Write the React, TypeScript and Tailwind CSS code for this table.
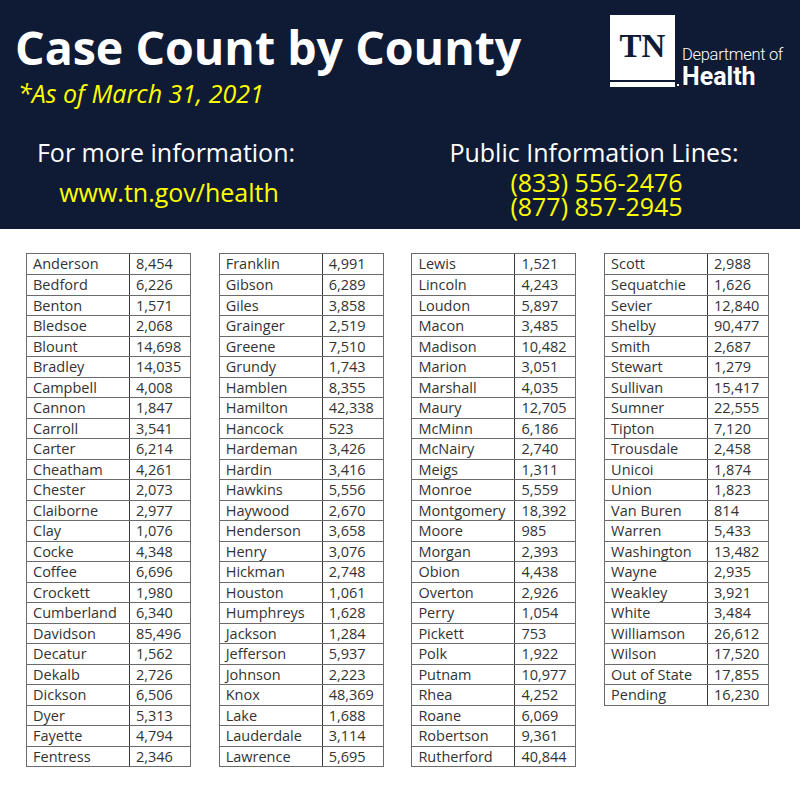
const T1: [string, string][] = [
  ['Anderson', '8,454'], ['Bedford', '6,226'], ['Benton', '1,571'], ['Bledsoe', '2,068'],
  ['Blount', '14,698'], ['Bradley', '14,035'], ['Campbell', '4,008'], ['Cannon', '1,847'],
  ['Carroll', '3,541'], ['Carter', '6,214'], ['Cheatham', '4,261'], ['Chester', '2,073'],
  ['Claiborne', '2,977'], ['Clay', '1,076'], ['Cocke', '4,348'], ['Coffee', '6,696'],
  ['Crockett', '1,980'], ['Cumberland', '6,340'], ['Davidson', '85,496'], ['Decatur', '1,562'],
  ['Dekalb', '2,726'], ['Dickson', '6,506'], ['Dyer', '5,313'], ['Fayette', '4,794'],
  ['Fentress', '2,346'],
];

const T2: [string, string][] = [
  ['Franklin', '4,991'], ['Gibson', '6,289'], ['Giles', '3,858'], ['Grainger', '2,519'],
  ['Greene', '7,510'], ['Grundy', '1,743'], ['Hamblen', '8,355'], ['Hamilton', '42,338'],
  ['Hancock', '523'], ['Hardeman', '3,426'], ['Hardin', '3,416'], ['Hawkins', '5,556'],
  ['Haywood', '2,670'], ['Henderson', '3,658'], ['Henry', '3,076'], ['Hickman', '2,748'],
  ['Houston', '1,061'], ['Humphreys', '1,628'], ['Jackson', '1,284'], ['Jefferson', '5,937'],
  ['Johnson', '2,223'], ['Knox', '48,369'], ['Lake', '1,688'], ['Lauderdale', '3,114'],
  ['Lawrence', '5,695'],
];

const T3: [string, string][] = [
  ['Lewis', '1,521'], ['Lincoln', '4,243'], ['Loudon', '5,897'], ['Macon', '3,485'],
  ['Madison', '10,482'], ['Marion', '3,051'], ['Marshall', '4,035'], ['Maury', '12,705'],
  ['McMinn', '6,186'], ['McNairy', '2,740'], ['Meigs', '1,311'], ['Monroe', '5,559'],
  ['Montgomery', '18,392'], ['Moore', '985'], ['Morgan', '2,393'], ['Obion', '4,438'],
  ['Overton', '2,926'], ['Perry', '1,054'], ['Pickett', '753'], ['Polk', '1,922'],
  ['Putnam', '10,977'], ['Rhea', '4,252'], ['Roane', '6,069'], ['Robertson', '9,361'],
  ['Rutherford', '40,844'],
];

const T4: [string, string][] = [
  ['Scott', '2,988'], ['Sequatchie', '1,626'], ['Sevier', '12,840'], ['Shelby', '90,477'],
  ['Smith', '2,687'], ['Stewart', '1,279'], ['Sullivan', '15,417'], ['Sumner', '22,555'],
  ['Tipton', '7,120'], ['Trousdale', '2,458'], ['Unicoi', '1,874'], ['Union', '1,823'],
  ['Van Buren', '814'], ['Warren', '5,433'], ['Washington', '13,482'], ['Wayne', '2,935'],
  ['Weakley', '3,921'], ['White', '3,484'], ['Williamson', '26,612'], ['Wilson', '17,520'],
  ['Out of State', '17,855'], ['Pending', '16,230'],
];

function CountyTable({ rows }: { rows: [string, string][] }) {
  return (
    <div className="w-[165px] self-start border border-[#6b6b6b]">
      {rows.map(([name, count], i) => (
        <div
          key={name}
          className={`flex h-[20.5px] items-center ${i > 0 ? 'border-t border-[#6b6b6b]' : ''}`}
        >
          <div className="h-full w-[103px] shrink-0 border-r border-[#3a3a3a] pl-[6px] leading-[20px]">{name}</div>
          <div className="h-full flex-1 pl-[6px] leading-[20px]">{count}</div>
        </div>
      ))}
    </div>
  );
}

function Logo() {
  return (
    <div className="flex items-end">
      <div className="flex h-[72px] w-[65px] flex-col bg-white">
        <div className="flex h-[65px] items-center justify-center pb-[2px]">
          <span
            className="text-[33px] font-bold leading-none text-[#0f1b35]"
            style={{ fontFamily: '"Liberation Serif", "DejaVu Serif", serif' }}
          >
            TN
          </span>
        </div>
        <div className="h-[2px] bg-[#0f1b35]"></div>
      </div>
      <div className="mb-[1px] ml-[2px] h-[2px] w-[2px] bg-white"></div>
      <div className="ml-[3px] flex flex-col" style={{ fontFamily: 'Roboto, "Liberation Sans", sans-serif' }}>
        <span className="text-[16.5px] font-light leading-[18px] tracking-[-0.3px] text-white">Department of</span>
        <span className="-mb-[3px] text-[25px] font-bold leading-[26px] text-white">Health</span>
      </div>
    </div>
  );
}

export default function App() {
  return (
    <div className="h-[800px] w-[800px] bg-white" style={{ fontFamily: '"Open Sans", "Noto Sans", sans-serif' }}>
      <div className="h-[229px] bg-[#0f1b35]">
        <div className="flex justify-between pr-[17px]">
          <div className="pl-[15px] pt-[23px]">
            <div className="text-[46.5px] font-bold leading-[48px] text-white">Case Count by County</div>
            <div className="mt-[7px] pl-[3px] text-[25px] italic leading-[30px] text-[#ffff00]">*As of March 31, 2021</div>
          </div>
          <div className="pt-[15px]">
            <Logo />
          </div>
        </div>
        <div className="mt-[27px] flex">
          <div className="w-[332px] text-center">
            <div className="text-[25px] leading-[34px] text-white">For more information:</div>
            <div className="mt-[6px] pl-[6px] text-[25px] leading-[34px] text-[#ffff00]">www.tn.gov/health</div>
          </div>
          <div className="ml-[112px] w-[300px] text-center">
            <div className="text-[25px] leading-[34px] text-white">Public Information Lines:</div>
            <div className="mt-[1px] pl-[5px] text-[25px] leading-[24px] text-[#ffff00]">(833) 556-2476</div>
            <div className="pl-[5px] text-[25px] leading-[24px] text-[#ffff00]">(877) 857-2945</div>
          </div>
        </div>
      </div>
      <div className="mt-[23.5px] flex gap-[27.7px] pl-[26px] text-[14.5px] text-[#333333]">
        <CountyTable rows={T1} />
        <CountyTable rows={T2} />
        <CountyTable rows={T3} />
        <CountyTable rows={T4} />
      </div>
    </div>
  );
}
